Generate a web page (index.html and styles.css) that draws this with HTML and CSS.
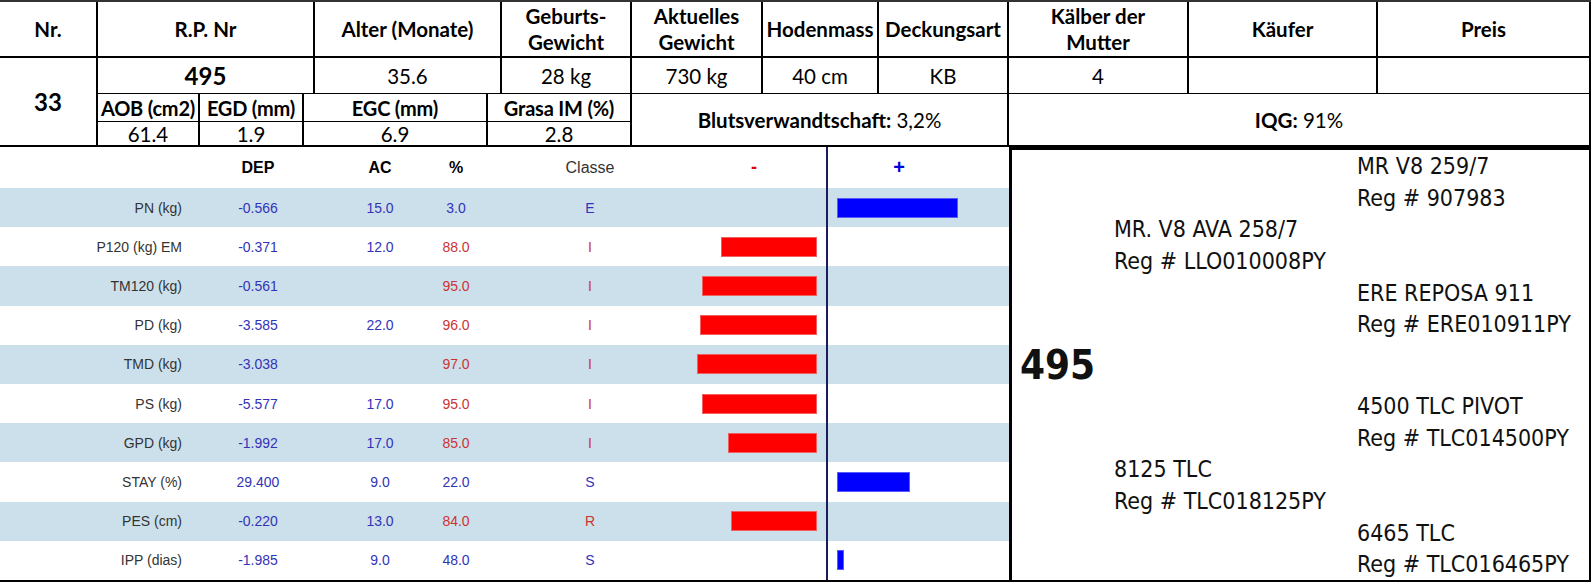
FILE: index.html
```html
<!DOCTYPE html>
<html lang="de">
<head>
<meta charset="utf-8">
<title>Stier 495</title>
<link rel="stylesheet" href="styles.css">
</head>
<body>
<div class="sheet">
  <div class="top">
    <div class="cell h r1 c-nr">Nr.</div>
    <div class="cell h r1 c-rp">R.P. Nr</div>
    <div class="cell h r1 c-alter">Alter (Monate)</div>
    <div class="cell h r1 c-geb">Geburts-<br>Gewicht</div>
    <div class="cell h r1 c-akt">Aktuelles<br>Gewicht</div>
    <div class="cell h r1 c-hod">Hodenmass</div>
    <div class="cell h r1 c-deck">Deckungsart</div>
    <div class="cell h r1 c-kalb">Kälber der<br>Mutter</div>
    <div class="cell h r1 c-kauf">Käufer</div>
    <div class="cell h r1 c-preis last">Preis</div>

    <div class="cell big nr-val">33</div>
    <div class="cell big r2 c-rp">495</div>
    <div class="cell r2 c-alter">35.6</div>
    <div class="cell r2 c-geb">28 kg</div>
    <div class="cell r2 c-akt">730 kg</div>
    <div class="cell r2 c-hod">40 cm</div>
    <div class="cell r2 c-deck">KB</div>
    <div class="cell r2 c-kalb">4</div>
    <div class="cell r2 c-kauf"></div>
    <div class="cell r2 c-preis last"></div>

    <div class="cell h r3 c-aob">AOB (cm2)</div>
    <div class="cell h r3 c-egd">EGD (mm)</div>
    <div class="cell h r3 c-egc">EGC (mm)</div>
    <div class="cell h r3 c-grasa">Grasa IM (%)</div>
    <div class="cell wide c-bluts"><b>Blutsverwandtschaft:</b>&nbsp;3,2%</div>
    <div class="cell wide c-iqg last"><b>IQG:</b>&nbsp;91%</div>

    <div class="cell r4 c-aob">61.4</div>
    <div class="cell r4 c-egd">1.9</div>
    <div class="cell r4 c-egc">6.9</div>
    <div class="cell r4 c-grasa">2.8</div>
  </div>

  <div class="lower">
    <div class="chart">
      <div class="crow head">
        <span class="lab"></span>
        <span class="val dep">DEP</span>
        <span class="val ac">AC</span>
        <span class="val pct">%</span>
        <span class="sp"></span>
        <span class="val cls">Classe</span>
        <span class="neg"><span class="minus">-</span></span>
        <span class="axis"></span>
        <span class="pos"><span class="plus">+</span></span>
      </div>

      <div class="crow band">
        <span class="lab">PN (kg)</span><span class="val b">-0.566</span><span class="val b">15.0</span><span class="val b">3.0</span><span class="sp"></span><span class="val b">E</span>
        <span class="neg"></span><span class="axis"></span><span class="pos"><i class="bar blue" style="width:121px"></i></span>
      </div>
      <div class="crow">
        <span class="lab">P120 (kg) EM</span><span class="val b">-0.371</span><span class="val b">12.0</span><span class="val r">88.0</span><span class="sp"></span><span class="val r">I</span>
        <span class="neg"><i class="bar red" style="width:96px"></i></span><span class="axis"></span><span class="pos"></span>
      </div>
      <div class="crow band">
        <span class="lab">TM120 (kg)</span><span class="val b">-0.561</span><span class="val b"></span><span class="val r">95.0</span><span class="sp"></span><span class="val r">I</span>
        <span class="neg"><i class="bar red" style="width:115px"></i></span><span class="axis"></span><span class="pos"></span>
      </div>
      <div class="crow">
        <span class="lab">PD (kg)</span><span class="val b">-3.585</span><span class="val b">22.0</span><span class="val r">96.0</span><span class="sp"></span><span class="val r">I</span>
        <span class="neg"><i class="bar red" style="width:117px"></i></span><span class="axis"></span><span class="pos"></span>
      </div>
      <div class="crow band">
        <span class="lab">TMD (kg)</span><span class="val b">-3.038</span><span class="val b"></span><span class="val r">97.0</span><span class="sp"></span><span class="val r">I</span>
        <span class="neg"><i class="bar red" style="width:120px"></i></span><span class="axis"></span><span class="pos"></span>
      </div>
      <div class="crow">
        <span class="lab">PS (kg)</span><span class="val b">-5.577</span><span class="val b">17.0</span><span class="val r">95.0</span><span class="sp"></span><span class="val r">I</span>
        <span class="neg"><i class="bar red" style="width:115px"></i></span><span class="axis"></span><span class="pos"></span>
      </div>
      <div class="crow band">
        <span class="lab">GPD (kg)</span><span class="val b">-1.992</span><span class="val b">17.0</span><span class="val r">85.0</span><span class="sp"></span><span class="val r">I</span>
        <span class="neg"><i class="bar red" style="width:89px"></i></span><span class="axis"></span><span class="pos"></span>
      </div>
      <div class="crow">
        <span class="lab">STAY (%)</span><span class="val b">29.400</span><span class="val b">9.0</span><span class="val b">22.0</span><span class="sp"></span><span class="val b">S</span>
        <span class="neg"></span><span class="axis"></span><span class="pos"><i class="bar blue" style="width:73px"></i></span>
      </div>
      <div class="crow band">
        <span class="lab">PES (cm)</span><span class="val b">-0.220</span><span class="val b">13.0</span><span class="val r">84.0</span><span class="sp"></span><span class="val r">R</span>
        <span class="neg"><i class="bar red" style="width:86px"></i></span><span class="axis"></span><span class="pos"></span>
      </div>
      <div class="crow">
        <span class="lab">IPP (dias)</span><span class="val b">-1.985</span><span class="val b">9.0</span><span class="val b">48.0</span><span class="sp"></span><span class="val b">S</span>
        <span class="neg"></span><span class="axis"></span><span class="pos"><i class="bar blue" style="width:7px"></i></span>
      </div>
    </div>

    <div class="pedigree">
      <div class="pl colA" style="grid-row:1">MR V8 259/7</div>
      <div class="pl colA" style="grid-row:2">Reg # 907983</div>
      <div class="pl colB" style="grid-row:3">MR. V8 AVA 258/7</div>
      <div class="pl colB" style="grid-row:4">Reg # LLO010008PY</div>
      <div class="pl colA" style="grid-row:5">ERE REPOSA 911</div>
      <div class="pl colA" style="grid-row:6">Reg # ERE010911PY</div>
      <div class="pl self" style="grid-row:7">495</div>
      <div class="pl colA" style="grid-row:8">4500 TLC PIVOT</div>
      <div class="pl colA" style="grid-row:9">Reg # TLC014500PY</div>
      <div class="pl colB" style="grid-row:10">8125 TLC</div>
      <div class="pl colB" style="grid-row:11">Reg # TLC018125PY</div>
      <div class="pl colA" style="grid-row:12">6465 TLC</div>
      <div class="pl colA" style="grid-row:13">Reg # TLC016465PY</div>
    </div>
  </div>
</div>
</body>
</html>
```

FILE: styles.css
```css
* { box-sizing: border-box; }
html, body { margin: 0; padding: 0; background: #fff; }
body { width: 1592px; height: 583px; overflow: hidden; }

.sheet { width: 1592px; }

/* ---------- top table ---------- */
.top {
  display: grid;
  width: 1591px;
  grid-template-columns: 98px 102px 104px 11px 173px 14px 130px 131px 116px 130px 180px 189px 213px;
  grid-template-rows: 56px 36px 28px 25px;
  border-top: 2px solid #333;
  font-family: Lato, "Liberation Sans", sans-serif;
  font-size: 20.5px;
  color: #000;
}
.cell {
  display: flex;
  align-items: center;
  justify-content: center;
  text-align: center;
  border-right: 2px solid #000;
  line-height: 26px;
  white-space: nowrap;
}
.cell.h { font-weight: 700; }
.cell.big { font-weight: 700; font-size: 24px; }
.r1 { grid-row: 1; border-bottom: 2px solid #000; }
.r2 { grid-row: 2; border-bottom: 1px solid #000; }
.r3 { grid-row: 3; border-bottom: 1px solid #000; font-size: 20px; letter-spacing: -0.2px; }
.r4 { grid-row: 4; border-bottom: 2px solid #000; }
.wide { grid-row: 3 / 5; border-bottom: 2px solid #000; }
.wide b { font-weight: 700; }

.c-nr { grid-column: 1 / 2; }
.nr-val { grid-column: 1 / 2; grid-row: 2 / 5; border-bottom: 2px solid #000; }
.c-rp { grid-column: 2 / 5; }
.c-alter { grid-column: 5 / 7; }
.c-geb { grid-column: 7 / 8; }
.c-akt { grid-column: 8 / 9; }
.c-hod { grid-column: 9 / 10; }
.c-deck { grid-column: 10 / 11; }
.c-kalb { grid-column: 11 / 12; }
.c-kauf { grid-column: 12 / 13; }
.c-preis { grid-column: 13 / 14; }
.c-aob { grid-column: 2 / 3; }
.c-egd { grid-column: 3 / 4; }
.c-egc { grid-column: 4 / 6; }
.c-grasa { grid-column: 6 / 8; }
.c-bluts { grid-column: 8 / 11; }
.c-iqg { grid-column: 11 / 14; }

/* ---------- lower part ---------- */
.lower { display: flex; width: 1591px; }

.chart {
  width: 1009px;
  border-bottom: 2px solid #000;
  font-family: "Liberation Sans", Arial, sans-serif;
  font-size: 14px;
}
.crow {
  display: grid;
  grid-template-columns: 190px 136px 108px 44px 52px 120px 167px 20px 172px;
  height: 39.2px;
  align-items: stretch;
}
.crow.head { height: 41px; font-size: 16px; }
.crow.band { background: #cce0eb; }
.crow > span { display: flex; align-items: center; }
.lab { justify-content: flex-end; padding-right: 8px; color: #333; }
.val { justify-content: center; }
.head .dep, .head .ac, .head .pct { font-weight: 700; color: #000; }
.head .cls { color: #333; }
.val.b { color: #3333b8; }
.val.r { color: #cc3333; }

.neg { justify-content: flex-end; }
.pos { justify-content: flex-start; }
.axis { justify-content: center; }
.axis::before {
  content: "";
  display: block;
  width: 2px;
  height: 100%;
  background: #1b1b5e;
}
.head .neg { justify-content: center; padding-left: 41px; }
.head .pos { justify-content: center; padding-right: 48px; }
.minus { color: #e00000; font-weight: 700; font-size: 18px; }
.plus { color: #0000dd; font-weight: 700; font-size: 20px; }

.bar { display: block; height: 20px; }
.bar.red { background: #ff0000; border: 1px solid #f06060; }
.bar.blue { background: #0000ff; border: 1px solid #5a5aff; }

/* ---------- pedigree ---------- */
.pedigree {
  width: 582px;
  height: 435px;
  border-left: 3px solid #000;
  border-top: 3px solid #000;
  border-right: 2px solid #000;
  border-bottom: 2px solid #000;
  display: grid;
  grid-template-columns: 102px 243px 1fr;
  grid-template-rows: repeat(6, 31.7px) 50px repeat(6, 31.7px);
  font-family: "DejaVu Sans Condensed", "DejaVu Sans", sans-serif;
  font-stretch: condensed;
  font-size: 23px;
  color: #111;
  overflow: hidden;
}
.pl { display: flex; align-items: center; white-space: nowrap; }
.colA { grid-column: 3; }
.colB { grid-column: 2; }
.self { grid-column: 1 / 3; padding-left: 8px; font-weight: 700; font-size: 40px; }
```
